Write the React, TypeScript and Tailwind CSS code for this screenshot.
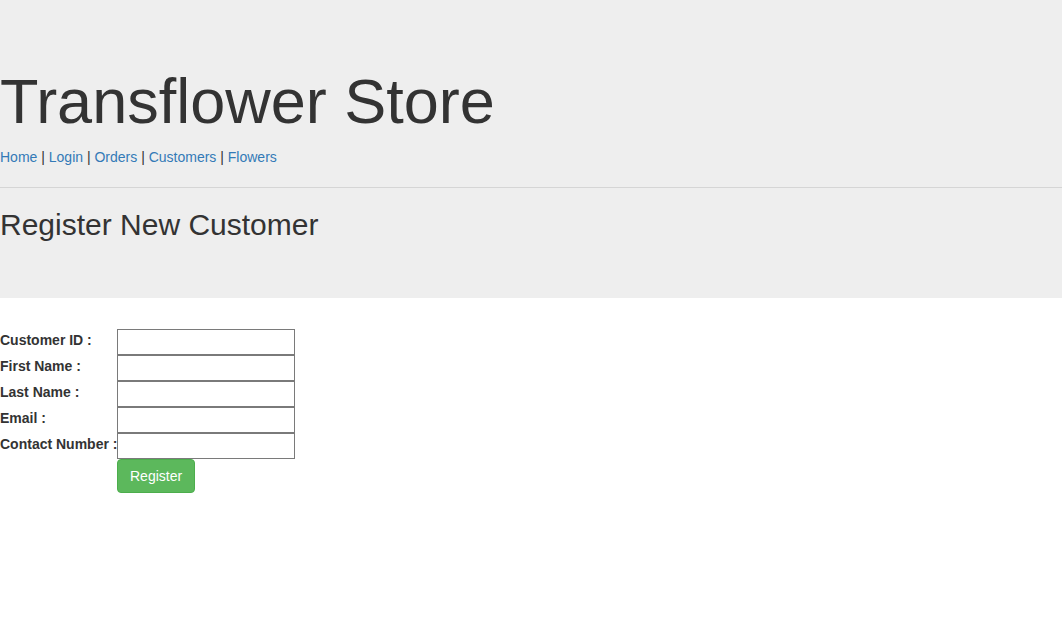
const fields = ["Customer ID :", "First Name :", "Last Name :", "Email :", "Contact Number :"];
const links = ["Home", "Login", "Orders", "Customers", "Flowers"];

export default function App() {
  return (
    <div className="min-h-[625px] bg-white font-['Liberation_Sans',Arial,sans-serif] text-[14px] leading-[20px] text-[#333]">
      <div className="bg-[#eee] pt-[67px] pb-[57px]">
        <h1 className="text-[63px] leading-[1.1] font-normal">Transflower Store</h1>
        <div className="mt-[11px]">
          {links.map((l, i) => (
            <span key={l}>
              {i > 0 && " | "}
              <a href="#" className="text-[#337ab7]">
                {l}
              </a>
            </span>
          ))}
        </div>
        <hr className="mt-[20px] border-t border-[#d5d5d5]" />
        <h2 className="mt-[20px] text-[30px] leading-[1.1] font-normal">Register New Customer</h2>
      </div>

      <form className="mt-[31px] grid w-fit grid-cols-[117px_178px]" onSubmit={(e) => e.preventDefault()}>
        {fields.map((f) => (
          <div key={f} className="contents">
            <label className="flex h-[26px] items-center pb-[5px] font-bold whitespace-nowrap">{f}</label>
            <input
              type="text"
              className="h-[26px] w-[178px] border border-[#7a7a7a] bg-white px-[2px]"
            />
          </div>
        ))}
        <div />
        <div>
          <button
            type="submit"
            className="h-[34px] rounded-[4px] border border-[#4cae4c] bg-[#5cb85c] px-[12px] text-[14px] text-white"
          >
            Register
          </button>
        </div>
      </form>
    </div>
  );
}
